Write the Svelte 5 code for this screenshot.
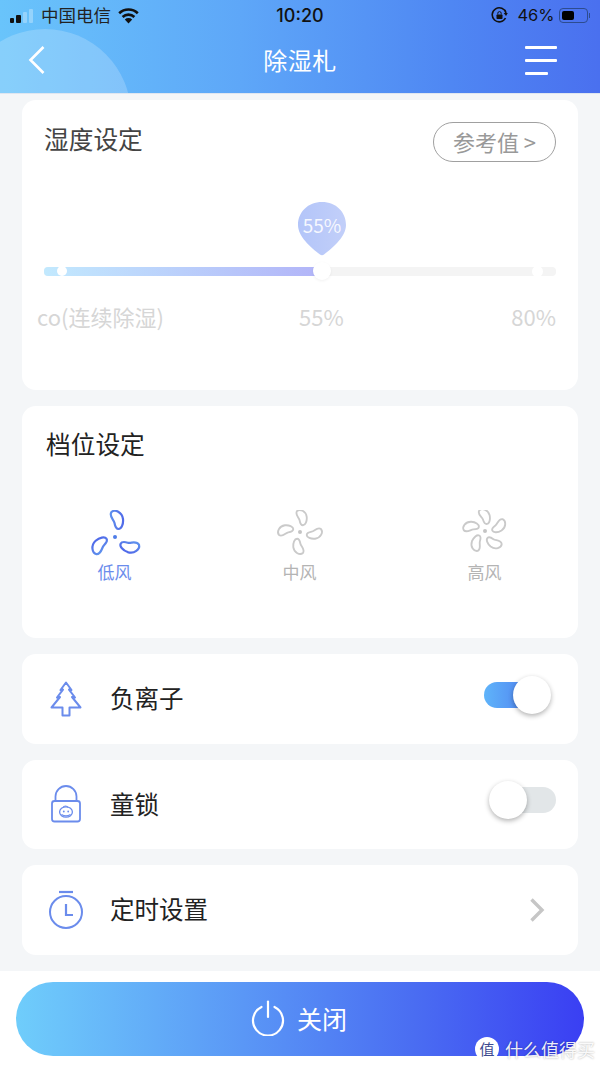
<script>
  const fans = [
    { label: '低风', angles: [0, 116, 235], active: true, scale: 1, top: 27 },
    { label: '中风', angles: [0, 90, 180, 270], active: false, scale: 0.84, top: 22 },
    { label: '高风', angles: [-8, 64, 136, 208, 280], active: false, scale: 0.84, top: 21 }
  ];
  const blade = 'M-3.5 -25 C0 -28 7 -25 8 -18 C8.5 -13 6.5 -8 3.5 -8 C1 -8 0 -11 -0.5 -14 C-1 -17 -6.5 -21 -3.5 -25Z';
</script>

<div class="page">
  <header class="top">
    <div class="glow"></div>
    <div class="status">
      <div class="status-left">
        <div class="signal"><i class="on s1"></i><i class="on s2"></i><i class="s3"></i><i class="s4"></i></div>
        <span class="carrier">中国电信</span>
        <svg class="wifi" width="23" height="17" viewBox="0 0 23 17">
          <path d="M11.5 16.5 L7.8 12.4 A5.4 5.4 0 0 1 15.2 12.4Z" fill="#111" />
          <path d="M5.6 10 A8.6 8.6 0 0 1 17.4 10" fill="none" stroke="#111" stroke-width="2.6" />
          <path d="M2.2 6.2 A13.4 13.4 0 0 1 20.8 6.2" fill="none" stroke="#111" stroke-width="2.6" />
        </svg>
      </div>
      <span class="time">10:20</span>
      <div class="status-right">
        <svg width="17" height="17" viewBox="0 0 17 17">
          <path d="M14.5 11 A7 7 0 1 1 15 6" fill="none" stroke="#111" stroke-width="1.6" />
          <path d="M12.7 6 L16.8 6 L15 9Z" fill="#111" />
          <rect x="5.5" y="7.5" width="6" height="4.5" rx="0.8" fill="#111" />
          <path d="M6.8 7.5 V6.3 A1.7 1.7 0 0 1 10.2 6.3 V7.5" fill="none" stroke="#111" stroke-width="1" />
        </svg>
        <span class="pct">46%</span>
        <div class="battery"><div class="level"></div></div>
        <div class="nub"></div>
      </div>
    </div>
    <nav class="nav">
      <svg width="20" height="30" viewBox="0 0 20 30">
        <path d="M16.5 2 L3.5 15 L16.5 28" fill="none" stroke="#fff" stroke-width="2.6" />
      </svg>
      <h1>除湿札</h1>
      <div class="menu"><i></i><i></i><i class="short"></i></div>
    </nav>
  </header>

  <main class="content">
    <section class="card humidity">
      <div class="title-row">
        <h2>湿度设定</h2>
        <button class="ref">参考值 &gt;</button>
      </div>
      <div class="slider">
        <div class="pin">
          <svg width="50" height="56" viewBox="0 0 50 56">
            <defs>
              <linearGradient id="pinFill" x1="0" x2="1" y1="0" y2="0">
                <stop offset="0" stop-color="#b3c5f9" />
                <stop offset="1" stop-color="#c2cff9" />
              </linearGradient>
            </defs>
            <path d="M25 1 C39 1 49 11 49 24 C49 35 37 46 27 53.5 C26 54.4 24 54.4 23 53.5 C13 46 1 35 1 24 C1 11 11 1 25 1Z" fill="url(#pinFill)" />
          </svg>
          <span>55%</span>
        </div>
        <div class="track"><div class="fill"></div></div>
        <i class="dot left"></i>
        <i class="dot mid"></i>
        <i class="dot right"></i>
      </div>
      <div class="scale">
        <span>co(连续除湿)</span>
        <span>55%</span>
        <span class="end">80%</span>
      </div>
    </section>

    <section class="card gears">
      <h2 class="dark">档位设定</h2>
      <div class="fans">
        {#each fans as fan}
          <div class="fan" class:active={fan.active}>
            <svg width="54" height="54" viewBox="-27 {-fan.top} 54 54">
              <defs>
                <linearGradient id="fanGrad" gradientUnits="userSpaceOnUse" x1="-22" x2="23" y1="0" y2="0">
                  <stop offset="0" stop-color="#6cc9fb" />
                  <stop offset="0.5" stop-color="#5a80ea" />
                  <stop offset="1" stop-color="#3c42e8" />
                </linearGradient>
              </defs>
              <circle r="2" fill={fan.active ? '#4f7de8' : '#c4c4c4'} />
              <g transform="scale({fan.scale})">
                {#each fan.angles as a}
                  <path d={blade} transform="rotate({a})" fill="none" stroke={fan.active ? 'url(#fanGrad)' : '#cacaca'} stroke-width="2.2" />
                {/each}
              </g>
            </svg>
            <span>{fan.label}</span>
          </div>
        {/each}
      </div>
    </section>

    <section class="card row">
      <svg class="icon" width="32" height="36" viewBox="0 0 32 36">
        <path d="M16 1.5 L21.5 9 L19 8.6 L25 16.5 L22 16 L30.5 26.5 L19.5 26.5 L19.5 34.5 L12.5 34.5 L12.5 26.5 L1.5 26.5 L10 16 L7 16.5 L13 8.6 L10.5 9Z" fill="none" stroke="#6b8cec" stroke-width="2" stroke-linejoin="round" />
      </svg>
      <span class="label">负离子</span>
      <div class="toggle on"><div class="knob"></div></div>
    </section>

    <section class="card row">
      <svg class="icon" width="32" height="38" viewBox="0 0 32 38">
        <path d="M5.5 16 V11.5 A10.5 10.5 0 0 1 26.5 11.5 V16" fill="none" stroke="#6b8cec" stroke-width="1.8" />
        <rect x="2" y="16" width="28" height="20.5" rx="2.5" fill="none" stroke="#6b8cec" stroke-width="1.8" />
        <ellipse cx="16" cy="27" rx="6.4" ry="5.2" fill="none" stroke="#6b8cec" stroke-width="1.3" />
        <path d="M13 22.5 C14 20.5 17 20.5 18 22.5 M11.5 29.5 C14 31 18 31 20.5 29.5" fill="none" stroke="#6b8cec" stroke-width="1.2" />
        <circle cx="13.8" cy="26.5" r="0.9" fill="#6b8cec" />
        <circle cx="18.2" cy="26.5" r="0.9" fill="#6b8cec" />
      </svg>
      <span class="label">童锁</span>
      <div class="toggle"><div class="knob"></div></div>
    </section>

    <section class="card row">
      <svg class="icon" width="36" height="40" viewBox="0 0 36 40">
        <path d="M11 2 H25" stroke="#6b8cec" stroke-width="2.2" fill="none" />
        <circle cx="18" cy="22" r="16" fill="none" stroke="#6b8cec" stroke-width="2" />
        <path d="M18 14 V25 H25" fill="none" stroke="#6b8cec" stroke-width="2.2" />
      </svg>
      <span class="label">定时设置</span>
      <svg class="chevron" width="16" height="26" viewBox="0 0 16 26">
        <path d="M2.5 2.5 L13 13 L2.5 23.5" fill="none" stroke="#c6c6c6" stroke-width="3.4" />
      </svg>
    </section>
  </main>

  <footer class="bottom">
    <button class="power">
      <svg width="34" height="36" viewBox="0 0 34 36">
        <path d="M10.5 7 A15 15 0 1 0 23.5 7" fill="none" stroke="#fff" stroke-width="2.2" stroke-linecap="round" />
        <path d="M17 1.5 V17" fill="none" stroke="#fff" stroke-width="2.2" stroke-linecap="round" />
      </svg>
      <span>关闭</span>
    </button>
    <div class="mark">
      <span class="mark-logo">值</span>
      <span>什么值得买</span>
    </div>
  </footer>
</div>

<style>
  :global(body) {
    margin: 0;
    background: #f4f6f8;
  }

  .page {
    width: 600px;
    height: 1067px;
    display: flex;
    flex-direction: column;
    background: #f4f6f8;
    font-family: "Noto Sans CJK SC", "Noto Sans", sans-serif;
    overflow: hidden;
  }

  .top {
    position: relative;
    height: 94px;
    flex: none;
    overflow: hidden;
    background: linear-gradient(90deg, #69c4fb 0%, #5ea7f8 40%, #4f87f3 75%, #4a70ef 100%);
    border-bottom: 1px solid #dfe6f0;
    box-sizing: border-box;
  }

  .glow {
    position: absolute;
    left: -41px;
    top: 29px;
    width: 172px;
    height: 172px;
    border-radius: 50%;
    background: rgba(255, 255, 255, 0.2);
  }

  .status {
    position: relative;
    height: 30px;
    display: grid;
    grid-template-columns: 1fr auto 1fr;
    align-items: center;
    padding: 0 10px;
    color: #111;
  }

  .status-left {
    display: flex;
    align-items: center;
  }

  .signal {
    display: flex;
    align-items: flex-end;
    gap: 2px;
    height: 15px;
    width: 23px;
    margin-right: 8px;
  }

  .signal i {
    flex: 1;
    border-radius: 1px;
    background: rgba(255, 255, 255, 0.3);
  }

  .signal .on {
    background: #111;
  }

  .s1 { height: 5px; }
  .s2 { height: 8px; }
  .s3 { height: 11px; }
  .s4 { height: 14px; }

  .carrier {
    font-size: 17.5px;
    line-height: 30px;
    color: #222;
  }

  .wifi {
    margin-left: 6px;
  }

  .time {
    font-family: Inter, sans-serif;
    font-size: 18px;
    font-weight: 500;
  }

  .status-right {
    display: flex;
    align-items: center;
    justify-content: flex-end;
  }

  .pct {
    font-family: Inter, sans-serif;
    font-size: 16.5px;
    margin: 0 4px 0 9px;
  }

  .battery {
    width: 29px;
    height: 15px;
    padding: 2px;
    box-sizing: border-box;
    border: 1px solid #2d4c8f;
    border-radius: 4px;
  }

  .level {
    width: 12px;
    height: 100%;
    background: #000;
    border-radius: 2px;
  }

  .nub {
    width: 1.5px;
    height: 5px;
    margin-left: 1px;
    background: #2d4c8f;
  }

  .nav {
    position: relative;
    display: grid;
    grid-template-columns: 1fr auto 1fr;
    align-items: center;
    padding: 0 43px 0 27px;
    height: 60px;
  }

  .nav h1 {
    margin: 0 0 0 16px;
    font-size: 24px;
    font-weight: 400;
    line-height: 60px;
    color: #fff;
    letter-spacing: 0.5px;
  }

  .menu {
    display: flex;
    flex-direction: column;
    gap: 10px;
    width: 32px;
    justify-self: end;
  }

  .menu i {
    display: block;
    height: 3px;
    background: #fff;
    border-radius: 1px;
  }

  .menu .short {
    width: 23px;
  }

  .content {
    flex: 1;
    padding: 6px 22px 16px;
    display: flex;
    flex-direction: column;
    gap: 16px;
  }

  .card {
    background: #fff;
    border-radius: 14px;
  }

  .humidity {
    height: 290px;
    padding: 20px 22px 0 15px;
    box-sizing: border-box;
  }

  .title-row {
    display: flex;
    align-items: flex-start;
    justify-content: space-between;
    padding-left: 7px;
  }

  h2 {
    margin: 0;
    font-size: 24.7px;
    font-weight: 400;
    line-height: 36px;
    color: #444;
  }

  h2.dark {
    color: #222;
  }

  .ref {
    width: 123px;
    height: 40px;
    margin-top: 2px;
    padding: 0 0 3px;
    border: 1.5px solid #a0a0a0;
    border-radius: 20px;
    background: #fff;
    color: #999;
    font-family: inherit;
    font-size: 22px;
    line-height: 30px;
  }

  .slider {
    position: relative;
    height: 10px;
    margin: 105px 0 0 7px;
    width: 512px;
  }

  .track {
    height: 9px;
    border-radius: 4px;
    background: #f4f4f4;
    overflow: hidden;
  }

  .fill {
    width: 278px;
    height: 100%;
    background: linear-gradient(90deg, #c2e9fe, #b2b4f8);
  }

  .pin {
    position: absolute;
    left: 253px;
    top: -66px;
    width: 50px;
    height: 56px;
  }

  .pin svg {
    display: block;
  }

  .pin span {
    position: absolute;
    left: 0;
    right: 0;
    top: 11px;
    text-align: center;
    font-size: 19px;
    line-height: 26px;
    color: rgba(255, 255, 255, 0.88);
  }

  .dot {
    position: absolute;
    border-radius: 50%;
    background: #fff;
  }

  .dot.left {
    left: 13px;
    top: -1px;
    width: 10px;
    height: 10px;
  }

  .dot.mid {
    left: 269px;
    top: -5px;
    width: 18px;
    height: 18px;
    box-shadow: 0 1px 3px rgba(0, 0, 0, 0.06);
  }

  .dot.right {
    left: 488px;
    top: -1px;
    width: 11px;
    height: 11px;
  }

  .scale {
    display: grid;
    grid-template-columns: 262px 44px 1fr;
    margin-top: 24px;
    font-size: 22px;
    line-height: 30px;
    color: #d6d6d6;
    white-space: nowrap;
  }

  .scale .end {
    text-align: right;
  }

  .gears {
    height: 232px;
    padding: 19px 24px 0;
    box-sizing: border-box;
  }

  .fans {
    display: grid;
    grid-template-columns: repeat(3, 185px);
    margin: 49px 0 0 -24px;
  }

  .fan {
    display: flex;
    flex-direction: column;
    align-items: center;
    color: #b4b4b4;
    font-size: 17px;
    line-height: 24px;
  }

  .fan svg {
    display: block;
    margin-bottom: -4px;
  }

  .fan.active {
    color: #6b8cec;
  }

  .row {
    height: 89.5px;
    display: flex;
    align-items: center;
    padding: 0 22px 0 26px;
    box-sizing: border-box;
  }

  .icon {
    flex: none;
    width: 36px;
    margin-right: 26px;
  }

  .label {
    flex: 1;
    font-size: 24.5px;
    line-height: 34px;
    padding-bottom: 1px;
    color: #222;
  }

  .toggle {
    position: relative;
    flex: none;
    width: 56px;
    height: 26px;
    margin-bottom: 8px;
    border-radius: 13px;
    background: #e2e6e8;
  }

  .toggle.on {
    margin-right: 16px;
    background: linear-gradient(90deg, #5fb4fa, #4d78ee);
  }

  .knob {
    position: absolute;
    left: -11px;
    top: -6px;
    width: 38px;
    height: 38px;
    border-radius: 50%;
    background: #fff;
    box-shadow: 0 2px 5px rgba(0, 0, 0, 0.3);
  }

  .toggle.on .knob {
    left: 29px;
  }

  .chevron {
    flex: none;
    margin-right: 11px;
  }

  .bottom {
    position: relative;
    flex: none;
    height: 96px;
    padding: 11px 16px 0;
    box-sizing: border-box;
    background: #fff;
  }

  .power {
    width: 568px;
    height: 74px;
    display: flex;
    align-items: center;
    justify-content: center;
    gap: 12px;
    padding: 0 2px 3px 0;
    border: 0;
    border-radius: 37px;
    background: linear-gradient(90deg, #6fcdfb 0%, #5a97f6 40%, #4a6df2 70%, #3a3ff3 100%);
    color: #fff;
    font-family: inherit;
    font-size: 25px;
  }

  .mark {
    position: absolute;
    left: 475px;
    bottom: 5px;
    display: flex;
    align-items: center;
    gap: 6px;
    color: rgba(255, 255, 255, 0.92);
    font-size: 18px;
    line-height: 26px;
    white-space: nowrap;
    text-shadow: 0 0 2px rgba(0, 0, 0, 0.35);
  }

  .mark-logo {
    width: 24px;
    height: 24px;
    border-radius: 50%;
    background: #fff;
    color: #3c4a90;
    font-size: 15px;
    line-height: 24px;
    text-align: center;
    text-shadow: none;
  }
</style>
